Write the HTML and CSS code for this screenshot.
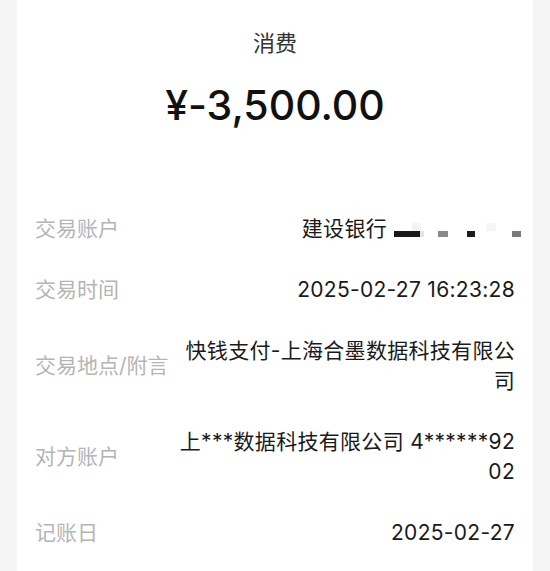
FILE: index.html
```html
<!DOCTYPE html>
<html lang="zh-CN">
<head>
    <meta charset="UTF-8">
    <meta name="viewport" content="width=device-width, initial-scale=1.0">
    <title>交易详情</title>
    <link rel="stylesheet" href="styles.css">
</head>
<body>
    <div class="card">
        <div class="head">
            <div class="type">消费</div>
            <div class="amount">¥-3,500.00</div>
        </div>

        <div class="rows">
            <div class="row">
                <div class="label">交易账户</div>
                <div class="value">建设银行<svg class="mask" width="127" height="20" viewBox="0 0 127 20">
                    <rect x="18" y="3" width="9" height="8" fill="#f4f4f4"/>
                    <rect x="0" y="11" width="26" height="6" fill="#1a1a1a"/>
                    <rect x="26" y="11" width="4" height="6" fill="#e6e6e6"/>
                    <rect x="44" y="11" width="10" height="6" fill="#8a8a8a"/>
                    <rect x="73" y="11" width="8" height="6" fill="#1c1c1c"/>
                    <rect x="92" y="3" width="10" height="8" fill="#f6f6f6"/>
                    <rect x="118" y="11" width="9" height="6" fill="#7a7a7a"/>
                </svg></div>
            </div>
            <div class="row">
                <div class="label">交易时间</div>
                <div class="value">2025-02-27 16:23:28</div>
            </div>
            <div class="row">
                <div class="label">交易地点/附言</div>
                <div class="value">快钱支付-上海合墨数据科技有限公司</div>
            </div>
            <div class="row">
                <div class="label">对方账户</div>
                <div class="value">上***数据科技有限公司 4******9202</div>
            </div>
            <div class="row">
                <div class="label">记账日</div>
                <div class="value">2025-02-27</div>
            </div>
        </div>
    </div>
</body>
</html>
```

FILE: styles.css
```css
body {
    margin: 0;
    background: #f5f5f5;
    font-family: Inter, "Noto Sans CJK SC", sans-serif;
    font-feature-settings: "calt" 0, "liga" 0;
    color: #1a1a1a;
}
.card {
    margin: 0 17px;
    min-height: 100vh;
    background: #fff;
    padding: 0 18px;
    box-sizing: border-box;
}
.head {
    padding-top: 28px;
    text-align: center;
}
.type {
    font-size: 22px;
    line-height: 30px;
    color: #333;
}
.amount {
    margin-top: 22px;
    font-size: 41px;
    line-height: 50px;
    font-weight: 500;
    color: #111;
}
.rows {
    margin-top: 84px;
    display: flex;
    flex-direction: column;
    gap: 31px;
}
.row {
    display: flex;
    align-items: center;
    justify-content: space-between;
}
.label {
    flex-shrink: 0;
    font-size: 21px;
    line-height: 30px;
    color: #b5b5b5;
}
.value {
    max-width: 342px;
    margin-left: auto;
    font-size: 21px;
    line-height: 30px;
    letter-spacing: 0.3px;
    text-align: right;
    word-break: break-all;
}
.mask {
    vertical-align: middle;
    margin-left: 7px;
    margin-right: -6px;
}
```
